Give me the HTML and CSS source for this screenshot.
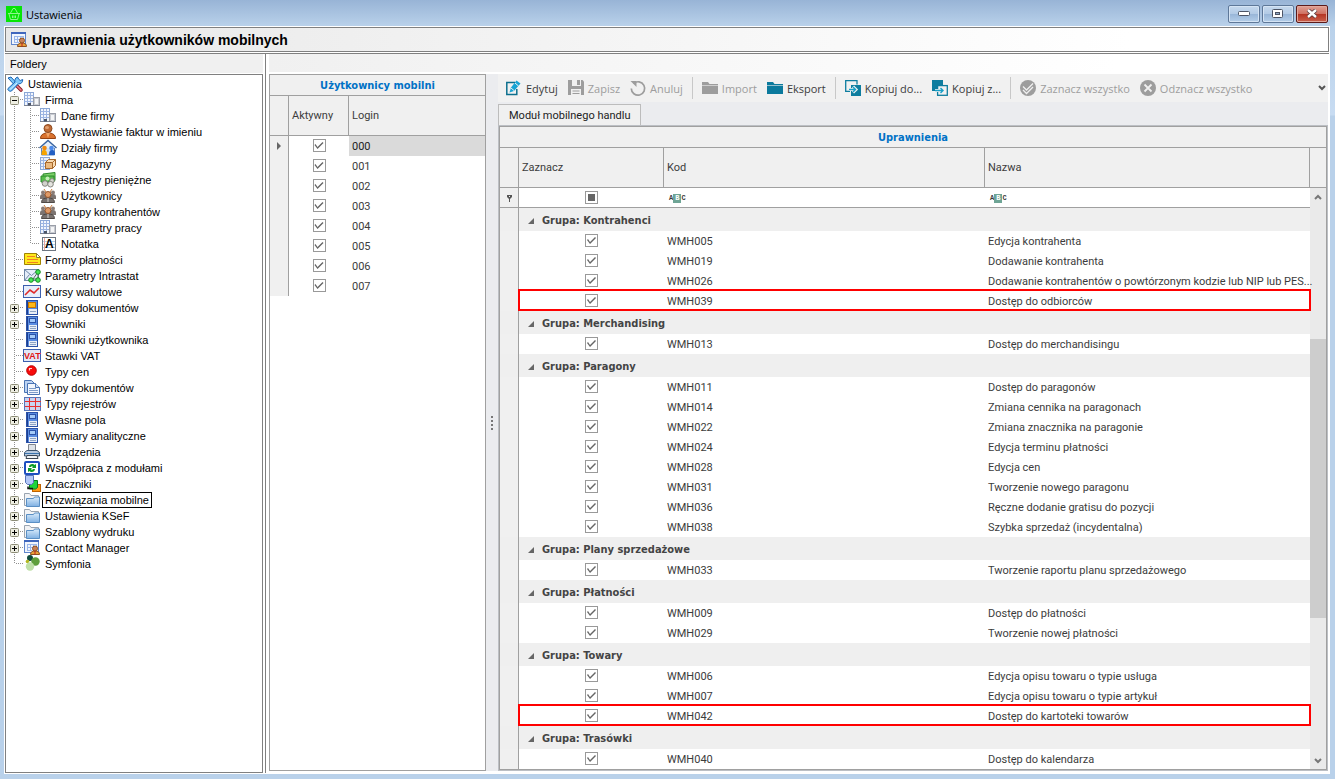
FILE: index.html
```html
<!DOCTYPE html>
<html lang="pl">
<head>
    <meta charset="UTF-8">
    <meta name="viewport" content="width=device-width, initial-scale=1.0">
    <title>Ustawienia</title>
    <link rel="stylesheet" href="styles.css">
</head>
<body>

<!-- icon set -->
<svg class="sprite" width="0" height="0">
    <defs>
        <linearGradient id="blue-fade" x1="0" y1="0" x2="0" y2="1">
            <stop offset="0" stop-color="#d9ebfb"/><stop offset="1" stop-color="#7fb0e2"/>
        </linearGradient>
    </defs>
    <symbol id="i-plus" viewBox="0 0 9 9">
        <rect x=".5" y=".5" width="8" height="8" rx="1" fill="#eeeee2" stroke="#8e8e78"/>
        <path d="M2 4.500h5M4.500 2v5" stroke="#000"/>
    </symbol>
    <symbol id="i-minus" viewBox="0 0 9 9">
        <rect x=".5" y=".5" width="8" height="8" rx="1" fill="#eeeee2" stroke="#8e8e78"/>
        <path d="M2 4.500h5" stroke="#000"/>
    </symbol>
    <symbol id="i-tools" viewBox="0 0 16 16">
        <path d="M10 10l4 4" stroke="#8c1c24" stroke-width="3.600" stroke-linecap="round"/>
        <path d="M10 10l4 4" stroke="#f0808a" stroke-width="1.600" stroke-linecap="round"/>
        <path d="M1 2l3-1 6 6.500-2 2z" fill="#7cc6f8" stroke="#1b63b4"/>
        <path d="M1 12.500L8 6c-.6-2 .3-4.300 2.600-5L11.500 3l1.800 1.500L15.700 3.500c.3 2.700-1.700 4.700-4.200 4.300L4.500 15c-1.500 1-4.500-1-3.500-2.500z" fill="#7cc6f8" stroke="#1b63b4"/>
        <path d="M3 13.500l7-6.500" stroke="#d8f2ff"/>
    </symbol>
    <symbol id="i-building" viewBox="0 0 16 16">
        <rect x=".5" y=".5" width="9" height="13" fill="#f2f6fd" stroke="#8ba7d6"/>
        <path d="M.5 3.500h9M.5 6.500h9M.5 9.500h9M3.500 1v12M6.500 1v12" stroke="#9db5e2"/>
        <rect x="9.500" y="5.500" width="6" height="8" fill="#c9ccd2" stroke="#9a9ea8"/>
        <rect x="11" y="7" width="3" height="5" fill="#f4f5f7"/>
        <path d="M0 13.500h16" stroke="#7c8290"/>
        <rect x="4" y="11" width="3" height="2.500" fill="#4c5668"/>
    </symbol>
    <symbol id="i-person" viewBox="0 0 16 16">
        <path d="M.5 14.500c0-3.500 2-4.500 5-5.500h5c3 1 5 2 5 5.500z" fill="#d9722e" stroke="#974312"/>
        <path d="M6 9l2 5 2-5z" fill="#f2a567"/>
        <circle cx="8" cy="4.500" r="4" fill="#c06a34" stroke="#8c4a20"/>
        <ellipse cx="7" cy="3.500" rx="2" ry="1.500" fill="#e2a070"/>
    </symbol>
    <symbol id="i-house" viewBox="0 0 16 16">
        <path d="M1.500 7h13v8h-13z" fill="#cfe0f6" stroke="#5f86c0"/>
        <path d="M-.5 8L8 .5 16.500 8" fill="#e4eefb" stroke="#39649f" stroke-width="1.400"/>
        <path d="M1.500 15c0-4 .5-5 2.500-5s3 1 3 5z" fill="#f7a400"/><circle cx="4.500" cy="8" r="2.300" fill="#ef8a10"/>
        <path d="M9 15c0-4 1-5 3-5s3 1 3 5z" fill="#2460c4"/><circle cx="11.500" cy="8" r="2.300" fill="#4d8bea"/>
    </symbol>
    <symbol id="i-store" viewBox="0 0 16 16">
        <rect x=".5" y="1.500" width="9" height="12" fill="#eaf1fc" stroke="#8ba7d6"/>
        <path d="M.5 4.500h9M.5 7.500h9M.5 10.500h9M3.500 1v12" stroke="#9db5e2"/>
        <path d="M5.500 6.500l3-3h7v6l-3 3h-7z" fill="#f8dcb4" stroke="#a8682a"/>
        <path d="M5.500 6.500h7v6h-7z" fill="#ecba80" stroke="#a8682a"/><path d="M12.500 6.500l3-3" stroke="#a8682a"/>
    </symbol>
    <symbol id="i-money" viewBox="0 0 16 16">
        <path d="M3 2l12-1.500v8L3 10z" fill="#7ed06a" stroke="#2b8a2b"/>
        <path d="M1 4h13v6H1z" fill="#58bd4c" stroke="#2b8a2b"/><circle cx="7.500" cy="6.500" r="2" fill="#c5efb8"/>
        <circle cx="5" cy="11.500" r="2.800" fill="#d2d2cc" stroke="#86867f"/>
        <circle cx="12" cy="8.800" r="2.200" fill="#d8d8d2" stroke="#86867f"/>
        <circle cx="10.500" cy="12.200" r="2.800" fill="#e4e4df" stroke="#86867f"/>
    </symbol>
    <symbol id="i-group" viewBox="0 0 16 16">
        <path d="M0 9c0-2 1-3 3-3h10c2 0 3 1 3 3v2H0z" fill="#7c7471"/>
        <circle cx="3" cy="4.500" r="2" fill="#8a7c76"/><circle cx="13" cy="4.500" r="2" fill="#8a7c76"/>
        <path d="M1.500 14.500c0-3 2-4.500 6.500-4.500s6.500 1.500 6.500 4.500z" fill="#77706d" stroke="#4f4946"/>
        <path d="M4 1l2 3M12 1l-2 3" stroke="#c77b3e"/>
        <circle cx="8" cy="6.500" r="3" fill="#e09a66" stroke="#94552c"/>
        <path d="M8 10v4" stroke="#d8d2ce"/>
    </symbol>
    <symbol id="i-form" viewBox="0 0 16 16">
        <path d="M.5 1.500h12l4 4v7H.5z" fill="#ffe81c" stroke="#a08300"/>
        <path d="M12.500 1.500v4h4z" fill="#fff" stroke="#8c7b28"/>
        <path d="M3 4.500h8M3 7.500h11M3 10.500h11" stroke="#f08020"/>
    </symbol>
    <symbol id="i-mail" viewBox="0 0 16 16">
        <rect x=".5" y="1.500" width="14" height="11" fill="#e6eef9" stroke="#7088a8"/>
        <path d="M.5 1.500l7 6 7-6M.5 12.500l5-6" fill="none" stroke="#7088a8"/>
        <path d="M14 4L9 11h5z" fill="none" stroke="#50705a"/>
        <circle cx="14" cy="4" r="2.300" fill="#45e855" stroke="#138a20"/>
        <circle cx="7" cy="12" r="2.300" fill="#45e855" stroke="#138a20"/>
        <circle cx="14" cy="12" r="2.300" fill="#45e855" stroke="#138a20"/>
    </symbol>
    <symbol id="i-chart" viewBox="0 0 16 16">
        <rect x="-.5" y="1.500" width="17" height="12" fill="#e6eefb" stroke="#3c5fae"/>
        <path d="M1 11l5-5 4 3 5-5" fill="none" stroke="#e02a2a" stroke-width="1.600"/>
    </symbol>
    <symbol id="i-book" viewBox="0 0 16 16">
        <rect x="2.500" y=".5" width="11" height="14" fill="#5a8de2" stroke="#2b52a8"/>
        <path d="M3.500 1v13" stroke="#1d3f90"/>
        <rect x="5.500" y="2.500" width="6" height="4" fill="#a4caf8" stroke="#2b52a8"/>
        <path d="M5 9h8v5H5z" fill="#e9eef6"/><path d="M6 10.500h6M6 12.500h6" stroke="#8ea4c4"/>
    </symbol>
    <symbol id="i-book-orange" viewBox="0 0 16 16">
        <rect x="2.500" y=".5" width="11" height="14" fill="#5a8de2" stroke="#2b52a8"/>
        <path d="M3.500 1v13" stroke="#1d3f90"/>
        <rect x="4.500" y="2.500" width="7" height="5" fill="#ffb818" stroke="#c87600"/>
        <path d="M5 9h8v5H5z" fill="#e9eef6"/><path d="M6 11.500h6" stroke="#8ea4c4"/>
    </symbol>
    <symbol id="i-red" viewBox="0 0 16 16">
        <circle cx="7.500" cy="6.500" r="4.800" fill="#f80a0a" stroke="#b80000"/><path d="M5.500 6.500v-2H8" fill="none" stroke="#ffd0d0" stroke-width="1.200"/>
    </symbol>
    <symbol id="i-docs" viewBox="0 0 16 16">
        <path d="M.5.5h7l3 3v9H.5z" fill="#bcd3f2" stroke="#4a74b4"/>
        <path d="M3.500 3.500h8l4 4v7h-12z" fill="#f1f6fd" stroke="#4a74b4"/>
        <path d="M5 8.500h7M5 10.500h9M5 12.500h9" stroke="#7f9cc8"/><path d="M11.500 3.500v4h4" fill="#d2e1f5" stroke="#4a74b4"/>
    </symbol>
    <symbol id="i-grid" viewBox="0 0 16 16">
        <rect x=".5" y="1.500" width="16" height="13" fill="#c9d5f2" stroke="#5976b8"/>
        <path d="M1 5.500h16M1 10.500h16M5.500 2v12M11.500 2v12" stroke="#e83030"/>
    </symbol>
    <symbol id="i-printer" viewBox="0 0 16 16">
        <path d="M4.500 7V.5h7V7z" fill="#dfe3e8" stroke="#80858e"/>
        <path d="M.5 8.500L3 6.500h10l2.500 2V12H.5z" fill="#b9cbe0" stroke="#3f556f"/>
        <path d="M1 9.500h14" stroke="#3a73ad"/>
        <path d="M3 11.500h10l1 3H2z" fill="#f2f5f8" stroke="#3b4552"/>
    </symbol>
    <symbol id="i-sync" viewBox="0 0 16 16">
        <rect x="1" y="2" width="14" height="12" rx="1" fill="#fff" stroke="#1e4fc0" stroke-width="2"/>
        <path d="M5 7c0-3.500 4.500-3.500 5.500-2L12 4v4H8l1-1.200c-.8-.8-1.800-.8-2 .2zM11 9c0 3.500-4.500 3.500-5.500 2L4 12V8h4L7 9.200c.8.8 1.800.8 2-.2z" fill="#109c28"/>
    </symbol>
    <symbol id="i-tags" viewBox="0 0 16 16">
        <rect x="8.500" y="8.500" width="8" height="7" fill="#ff9a14" stroke="#c06400"/>
        <path d="M5.500 4.500h8v7l-2 1.500h-6z" fill="#20d43a" stroke="#0b7c1c"/>
        <path d="M1.500-.5h8v7l-2 2h-4l-2-2z" fill="#b4c8f8" stroke="#5572b8"/>
        <path d="M4 10.500v2h5" stroke="#111" fill="none" stroke-width="1.500"/>
    </symbol>
    <symbol id="i-folder" viewBox="0 0 16 16">
        <path d="M.5 13.500v-12h5l1.500 2h7.500v10z" fill="#f2f3f5" stroke="#9aa4b0"/>
        <path d="M2.500 14.500v-8h7l1-1.500h5v9.500z" fill="url(#blue-fade)" stroke="#5a8fc4"/>
    </symbol>
    <symbol id="i-contact" viewBox="0 0 16 16">
        <rect x=".5" y=".5" width="14" height="12" fill="#f0f5fd" stroke="#6086cc"/>
        <path d="M0 1h15" stroke="#3f66bd" stroke-width="2"/>
        <path d="M3 4.500h9M3 7.500h9M3 10.500h5M3.500 4v7M6.500 4v7M9.500 4v5M12.500 4v3" stroke="#9ab6ea"/>
        <path d="M6.500 14.500c0-2.500 1.500-3.500 4.500-3.500s4.500 1 4.500 3.500z" fill="#e8a038" stroke="#8c5020"/>
        <circle cx="11" cy="8.500" r="2.500" fill="#c88058" stroke="#8c5020"/>
        <path d="M11 11v3.500" stroke="#c02020"/>
    </symbol>
    <symbol id="i-symfonia" viewBox="0 0 16 16">
        <circle cx="6" cy="2" r="3" fill="#0e4a3b"/><circle cx="3.500" cy="5.500" r="1.800" fill="#b5b820"/>
        <circle cx="11.500" cy="5.500" r="4.200" fill="#5f9f3c"/><circle cx="6" cy="10.500" r="4.200" fill="#bfe0a8"/>
    </symbol>
    <symbol id="i-basket" viewBox="0 0 16 16">
        <rect width="16" height="16" fill="#06e406"/>
        <path d="M2 7.500h12M3 8l1.500 5.500h7L13 8M4.500 7L7 2.500h2L11.500 7M6.500 9.500v2.500M8 9.500v2.500M9.500 9.500v2.500" fill="none" stroke="#8cf58c"/>
    </symbol>
    <symbol id="i-edit" viewBox="0 0 16 16">
        <path d="M9 2.500H.8v12h10V9" fill="none" stroke="#0c6f8e" stroke-width="1.500"/>
        <path d="M3.500 12.500l1.500-5 5.500-7 4 3-6.500 7.500z" fill="#18a4d4"/><path d="M5 8l3 2.500M9 3l3.500 3" stroke="#f1f1f1"/>
    </symbol>
    <symbol id="i-save" viewBox="0 0 16 16">
        <path d="M0 0h14.500L16 1.500V15H0z"/><path d="M4 0h9v6H4zM3 9h10v6H3z" fill="#f0f0f0"/>
        <path d="M9 0h3v5H9zM4.500 10.500h7v1h-7zM4.500 13h7v1h-7z"/>
    </symbol>
    <symbol id="i-undo" viewBox="0 0 16 16">
        <path d="M3.500 3.500A6.700 6.700 0 1 1 1.300 8.500" fill="none" stroke="currentColor" stroke-width="1.700"/><path d="M.5 1h6v6z"/>
    </symbol>
    <symbol id="i-dir" viewBox="0 0 16 16">
        <path d="M0 2h6l1.500 2H16v10H0z"/><path d="M0 5.500h16" stroke="#f0f0f0" stroke-width=".6"/>
    </symbol>
    <symbol id="i-copy-to" viewBox="0 0 16 16">
        <path d="M6 5h10v11H6z" fill="#0e7d9f"/>
        <path d="M12 4.500V.7H.7v10.600H5" fill="none" stroke="#0e7d9f" stroke-width="1.300"/>
        <path d="M4 9.500h6M8 6.500l3 3-3 3" fill="none" stroke="#f0f0f0" stroke-width="3"/>
        <path d="M4 9.500h6M8 7l2.500 2.500L8 12" fill="none" stroke="#18a0c8" stroke-width="1.400"/>
    </symbol>
    <symbol id="i-copy-from" viewBox="0 0 16 16">
        <rect width="11" height="11" fill="#0e7d9f"/>
        <rect x="5.600" y="5.600" width="9.700" height="9.700" fill="#f0f0f0" stroke="#0e7d9f" stroke-width="1.300"/>
        <path d="M3 10.500h4" stroke="#f0f0f0" stroke-width="3"/>
        <path d="M3 10.500h8M8.500 8l2.500 2.500L8.500 13" fill="none" stroke="#18a0c8" stroke-width="1.400"/>
    </symbol>
    <symbol id="i-all" viewBox="0 0 16 16">
        <circle cx="8" cy="8" r="8"/><path d="M3 6.500L6.500 10 13 3.500M3 10l3.500 3.500L13 7" fill="none" stroke="#f0f0f0" stroke-width="1.300"/>
    </symbol>
    <symbol id="i-none" viewBox="0 0 16 16">
        <circle cx="8" cy="8" r="8"/><path d="M4.500 4.500l7 7M11.500 4.500l-7 7" stroke="#f0f0f0" stroke-width="1.800"/>
    </symbol>
    <symbol id="i-down" viewBox="0 0 8 6"><path d="M1 1l3 3 3-3" fill="none" stroke="currentColor" stroke-width="2"/></symbol>
    <symbol id="i-up" viewBox="0 0 8 6"><path d="M1 5l3-3 3 3" fill="none" stroke="currentColor" stroke-width="2"/></symbol>
    <symbol id="i-pin" viewBox="0 0 7 8"><path d="M1 1h5v2L4 5v3H3V5L1 3z" fill="#555"/><path d="M3 2h1v1H3z" fill="#f0f0f0"/></symbol>
    <symbol id="i-tri" viewBox="0 0 6 6"><path d="M6 0v6H0z" fill="#666"/></symbol>
    <symbol id="i-row" viewBox="0 0 4 8"><path d="M0 0l4 4-4 4z" fill="#666"/></symbol>
</svg>

<div class="window">
    <div class="title-bar">
        <svg class="icon"><use href="#i-basket"/></svg>
        <span class="title-text">Ustawienia</span>
        <div class="window-buttons">
            <button class="win-btn" aria-label="Minimalizuj"><svg width="12" height="6"><rect x=".5" y=".5" width="11" height="4" rx="1" fill="#fff" stroke="#4c5465"/></svg></button>
            <button class="win-btn" aria-label="Maksymalizuj"><svg width="12" height="10"><rect x=".5" y=".5" width="10" height="8" rx="1" fill="#fff" stroke="#4c5465"/><rect x="3.500" y="3.500" width="4" height="2" fill="#8ea6c4" stroke="#4c5465"/></svg></button>
            <button class="win-btn win-close" aria-label="Zamknij"><svg width="12" height="10"><path d="M2 1l8 7M10 1L2 8" stroke="#50383c" stroke-width="4"/><path d="M2 1l8 7M10 1L2 8" stroke="#fff" stroke-width="2.400"/></svg></button>
        </div>
    </div>

    <div class="content">
        <header class="page-header">
            <svg class="icon"><use href="#i-contact"/></svg>
            <h1>Uprawnienia użytkowników mobilnych</h1>
        </header>

        <div class="main">
            <aside class="folders">
                <h2 class="folders-title">Foldery</h2>
                <nav class="tree">
                    <div class="node"><svg class="icon"><use href="#i-tools"/></svg><span class="label">Ustawienia</span></div>
                    <ul>
                        <li>
                            <div class="node"><span class="branch"><button class="toggle" aria-label="Zwiń"><svg><use href="#i-minus"/></svg></button></span><svg class="icon"><use href="#i-building"/></svg><span class="label">Firma</span></div>
                            <ul class="nested">
                                <li><div class="node"><span class="branch"></span><svg class="icon"><use href="#i-building"/></svg><span class="label">Dane firmy</span></div></li>
                                <li><div class="node"><span class="branch"></span><svg class="icon"><use href="#i-person"/></svg><span class="label">Wystawianie faktur w imieniu</span></div></li>
                                <li><div class="node"><span class="branch"></span><svg class="icon"><use href="#i-house"/></svg><span class="label">Działy firmy</span></div></li>
                                <li><div class="node"><span class="branch"></span><svg class="icon"><use href="#i-store"/></svg><span class="label">Magazyny</span></div></li>
                                <li><div class="node"><span class="branch"></span><svg class="icon"><use href="#i-money"/></svg><span class="label">Rejestry pieniężne</span></div></li>
                                <li><div class="node"><span class="branch"></span><svg class="icon"><use href="#i-group"/></svg><span class="label">Użytkownicy</span></div></li>
                                <li><div class="node"><span class="branch"></span><svg class="icon"><use href="#i-group"/></svg><span class="label">Grupy kontrahentów</span></div></li>
                                <li><div class="node"><span class="branch"></span><svg class="icon"><use href="#i-building"/></svg><span class="label">Parametry pracy</span></div></li>
                                <li>
                                    <div class="node"><span class="branch"></span><svg class="icon">
                                        <rect x="2.500" y="1.500" width="13" height="13" fill="#fff" stroke="#6d7681"/>
                                        <path d="M3 5.500h12M3 8.500h12M3 11.500h12" stroke="#b5d2ea"/>
                                        <path d="M4.500 2v12" stroke="#e8a5a0"/>
                                        <text x="5" y="12" class="svg-a">A</text>
                                    </svg><span class="label">Notatka</span></div>
                                </li>
                            </ul>
                        </li>
                        <li><div class="node"><span class="branch"></span><svg class="icon"><use href="#i-form"/></svg><span class="label">Formy płatności</span></div></li>
                        <li><div class="node"><span class="branch"></span><svg class="icon"><use href="#i-mail"/></svg><span class="label">Parametry Intrastat</span></div></li>
                        <li><div class="node"><span class="branch"></span><svg class="icon"><use href="#i-chart"/></svg><span class="label">Kursy walutowe</span></div></li>
                        <li><div class="node"><span class="branch"><button class="toggle" aria-label="Rozwiń"><svg><use href="#i-plus"/></svg></button></span><svg class="icon"><use href="#i-book-orange"/></svg><span class="label">Opisy dokumentów</span></div></li>
                        <li><div class="node"><span class="branch"><button class="toggle" aria-label="Rozwiń"><svg><use href="#i-plus"/></svg></button></span><svg class="icon"><use href="#i-book"/></svg><span class="label">Słowniki</span></div></li>
                        <li><div class="node"><span class="branch"></span><svg class="icon"><use href="#i-book"/></svg><span class="label">Słowniki użytkownika</span></div></li>
                        <li>
                            <div class="node"><span class="branch"></span><svg class="icon">
                                <rect x="-.5" y="1.500" width="17" height="12" fill="#e2e8f6" stroke="#3c5fae"/>
                                <text x="0" y="11" class="svg-vat">VAT</text>
                            </svg><span class="label">Stawki VAT</span></div>
                        </li>
                        <li><div class="node"><span class="branch"></span><svg class="icon"><use href="#i-red"/></svg><span class="label">Typy cen</span></div></li>
                        <li><div class="node"><span class="branch"><button class="toggle" aria-label="Rozwiń"><svg><use href="#i-plus"/></svg></button></span><svg class="icon"><use href="#i-docs"/></svg><span class="label">Typy dokumentów</span></div></li>
                        <li><div class="node"><span class="branch"><button class="toggle" aria-label="Rozwiń"><svg><use href="#i-plus"/></svg></button></span><svg class="icon"><use href="#i-grid"/></svg><span class="label">Typy rejestrów</span></div></li>
                        <li><div class="node"><span class="branch"><button class="toggle" aria-label="Rozwiń"><svg><use href="#i-plus"/></svg></button></span><svg class="icon"><use href="#i-book"/></svg><span class="label">Własne pola</span></div></li>
                        <li><div class="node"><span class="branch"><button class="toggle" aria-label="Rozwiń"><svg><use href="#i-plus"/></svg></button></span><svg class="icon"><use href="#i-book"/></svg><span class="label">Wymiary analityczne</span></div></li>
                        <li><div class="node"><span class="branch"><button class="toggle" aria-label="Rozwiń"><svg><use href="#i-plus"/></svg></button></span><svg class="icon"><use href="#i-printer"/></svg><span class="label">Urządzenia</span></div></li>
                        <li><div class="node"><span class="branch"><button class="toggle" aria-label="Rozwiń"><svg><use href="#i-plus"/></svg></button></span><svg class="icon"><use href="#i-sync"/></svg><span class="label">Współpraca z modułami</span></div></li>
                        <li><div class="node"><span class="branch"><button class="toggle" aria-label="Rozwiń"><svg><use href="#i-plus"/></svg></button></span><svg class="icon"><use href="#i-tags"/></svg><span class="label">Znaczniki</span></div></li>
                        <li><div class="node"><span class="branch"><button class="toggle" aria-label="Rozwiń"><svg><use href="#i-plus"/></svg></button></span><svg class="icon"><use href="#i-folder"/></svg><span class="label selected">Rozwiązania mobilne</span></div></li>
                        <li><div class="node"><span class="branch"><button class="toggle" aria-label="Rozwiń"><svg><use href="#i-plus"/></svg></button></span><svg class="icon"><use href="#i-folder"/></svg><span class="label">Ustawienia KSeF</span></div></li>
                        <li><div class="node"><span class="branch"><button class="toggle" aria-label="Rozwiń"><svg><use href="#i-plus"/></svg></button></span><svg class="icon"><use href="#i-folder"/></svg><span class="label">Szablony wydruku</span></div></li>
                        <li><div class="node"><span class="branch"><button class="toggle" aria-label="Rozwiń"><svg><use href="#i-plus"/></svg></button></span><svg class="icon"><use href="#i-contact"/></svg><span class="label">Contact Manager</span></div></li>
                        <li><div class="node"><span class="branch"></span><svg class="icon"><use href="#i-symfonia"/></svg><span class="label">Symfonia</span></div></li>
                    </ul>
                </nav>
            </aside>

            <div class="workspace">
                <div class="top-strip"></div>
                <div class="panels">
                    <section class="grid users">
                        <h2 class="band">Użytkownicy mobilni</h2>
                        <table>
                            <colgroup><col class="c-ind"><col class="c-active"><col></colgroup>
                            <thead>
                                <tr class="head"><th></th><th>Aktywny</th><th>Login</th></tr>
                            </thead>
                            <tbody>
                                <tr class="current"><td class="ind"><svg width="4" height="8"><use href="#i-row"/></svg></td><td class="tick"><input type="checkbox" aria-label="000" checked></td><td>000</td></tr>
                                <tr><td class="ind"></td><td class="tick"><input type="checkbox" aria-label="001" checked></td><td>001</td></tr>
                                <tr><td class="ind"></td><td class="tick"><input type="checkbox" aria-label="002" checked></td><td>002</td></tr>
                                <tr><td class="ind"></td><td class="tick"><input type="checkbox" aria-label="003" checked></td><td>003</td></tr>
                                <tr><td class="ind"></td><td class="tick"><input type="checkbox" aria-label="004" checked></td><td>004</td></tr>
                                <tr><td class="ind"></td><td class="tick"><input type="checkbox" aria-label="005" checked></td><td>005</td></tr>
                                <tr><td class="ind"></td><td class="tick"><input type="checkbox" aria-label="006" checked></td><td>006</td></tr>
                                <tr><td class="ind"></td><td class="tick"><input type="checkbox" aria-label="007" checked></td><td>007</td></tr>
                            </tbody>
                        </table>
                    </section>

                    <div class="splitter"><i></i><i></i><i></i><i></i></div>

                    <section class="permissions">
                        <div class="toolbar">
                            <button><svg class="icon"><use href="#i-edit"/></svg>Edytuj</button>
                            <button disabled><svg class="icon"><use href="#i-save"/></svg>Zapisz</button>
                            <button disabled><svg class="icon"><use href="#i-undo"/></svg>Anuluj</button>
                            <span class="sep"></span>
                            <button disabled><svg class="icon"><use href="#i-dir"/></svg>Import</button>
                            <button><svg class="icon teal"><use href="#i-dir"/></svg>Eksport</button>
                            <span class="sep"></span>
                            <button><svg class="icon"><use href="#i-copy-to"/></svg>Kopiuj do...</button>
                            <button><svg class="icon"><use href="#i-copy-from"/></svg>Kopiuj z...</button>
                            <span class="sep"></span>
                            <button disabled><svg class="icon"><use href="#i-all"/></svg>Zaznacz wszystko</button>
                            <button disabled><svg class="icon"><use href="#i-none"/></svg>Odznacz wszystko</button>
                            <button class="more" aria-label="Więcej"><svg width="8" height="6"><use href="#i-down"/></svg></button>
                        </div>
                        <div class="tabs">
                            <button class="tab">Moduł mobilnego handlu</button>
                        </div>
                        <div class="tab-page">
                            <div class="grid">
                                <h2 class="band">Uprawnienia</h2>
                                <div class="grid-body">
                                    <div class="rows">
                                        <table>
                                            <colgroup><col class="c-ind"><col class="c-select"><col class="c-code"><col></colgroup>
                                            <thead>
                                                <tr class="head"><th></th><th>Zaznacz</th><th>Kod</th><th>Nazwa</th></tr>
                                                <tr class="filter">
                                                    <td class="ind"><svg width="7" height="8"><use href="#i-pin"/></svg></td>
                                                    <td class="tick"><input type="checkbox" class="partial" aria-label="Zaznacz"></td>
                                                    <td><label class="filter-box"><span class="abc">A<b>B</b>C</span><input type="text" aria-label="Kod"></label></td>
                                                    <td><label class="filter-box"><span class="abc">A<b>B</b>C</span><input type="text" aria-label="Nazwa"></label></td>
                                                </tr>
                                            </thead>
                                            <tbody>
                                                <tr class="group"><td class="ind"></td><td colspan="3"><button><svg width="6" height="6"><use href="#i-tri"/></svg>Grupa: Kontrahenci</button></td></tr>
                                                <tr><td class="ind"></td><td class="tick"><input type="checkbox" aria-label="WMH005" checked></td><td>WMH005</td><td>Edycja kontrahenta</td></tr>
                                                <tr><td class="ind"></td><td class="tick"><input type="checkbox" aria-label="WMH019" checked></td><td>WMH019</td><td>Dodawanie kontrahenta</td></tr>
                                                <tr><td class="ind"></td><td class="tick"><input type="checkbox" aria-label="WMH026" checked></td><td>WMH026</td><td>Dodawanie kontrahentów o powtórzonym kodzie lub NIP lub PES...</td></tr>
                                                <tr class="marked"><td class="ind"></td><td class="tick"><input type="checkbox" aria-label="WMH039" checked></td><td>WMH039</td><td>Dostęp do odbiorców</td></tr>
                                                <tr class="group"><td class="ind"></td><td colspan="3"><button><svg width="6" height="6"><use href="#i-tri"/></svg>Grupa: Merchandising</button></td></tr>
                                                <tr><td class="ind"></td><td class="tick"><input type="checkbox" aria-label="WMH013" checked></td><td>WMH013</td><td>Dostęp do merchandisingu</td></tr>
                                                <tr class="group"><td class="ind"></td><td colspan="3"><button><svg width="6" height="6"><use href="#i-tri"/></svg>Grupa: Paragony</button></td></tr>
                                                <tr><td class="ind"></td><td class="tick"><input type="checkbox" aria-label="WMH011" checked></td><td>WMH011</td><td>Dostęp do paragonów</td></tr>
                                                <tr><td class="ind"></td><td class="tick"><input type="checkbox" aria-label="WMH014" checked></td><td>WMH014</td><td>Zmiana cennika na paragonach</td></tr>
                                                <tr><td class="ind"></td><td class="tick"><input type="checkbox" aria-label="WMH022" checked></td><td>WMH022</td><td>Zmiana znacznika na paragonie</td></tr>
                                                <tr><td class="ind"></td><td class="tick"><input type="checkbox" aria-label="WMH024" checked></td><td>WMH024</td><td>Edycja terminu płatności</td></tr>
                                                <tr><td class="ind"></td><td class="tick"><input type="checkbox" aria-label="WMH028" checked></td><td>WMH028</td><td>Edycja cen</td></tr>
                                                <tr><td class="ind"></td><td class="tick"><input type="checkbox" aria-label="WMH031" checked></td><td>WMH031</td><td>Tworzenie nowego paragonu</td></tr>
                                                <tr><td class="ind"></td><td class="tick"><input type="checkbox" aria-label="WMH036" checked></td><td>WMH036</td><td>Ręczne dodanie gratisu do pozycji</td></tr>
                                                <tr><td class="ind"></td><td class="tick"><input type="checkbox" aria-label="WMH038" checked></td><td>WMH038</td><td>Szybka sprzedaż (incydentalna)</td></tr>
                                                <tr class="group"><td class="ind"></td><td colspan="3"><button><svg width="6" height="6"><use href="#i-tri"/></svg>Grupa: Plany sprzedażowe</button></td></tr>
                                                <tr><td class="ind"></td><td class="tick"><input type="checkbox" aria-label="WMH033" checked></td><td>WMH033</td><td>Tworzenie raportu planu sprzedażowego</td></tr>
                                                <tr class="group"><td class="ind"></td><td colspan="3"><button><svg width="6" height="6"><use href="#i-tri"/></svg>Grupa: Płatności</button></td></tr>
                                                <tr><td class="ind"></td><td class="tick"><input type="checkbox" aria-label="WMH009" checked></td><td>WMH009</td><td>Dostęp do płatności</td></tr>
                                                <tr><td class="ind"></td><td class="tick"><input type="checkbox" aria-label="WMH029" checked></td><td>WMH029</td><td>Tworzenie nowej płatności</td></tr>
                                                <tr class="group"><td class="ind"></td><td colspan="3"><button><svg width="6" height="6"><use href="#i-tri"/></svg>Grupa: Towary</button></td></tr>
                                                <tr><td class="ind"></td><td class="tick"><input type="checkbox" aria-label="WMH006" checked></td><td>WMH006</td><td>Edycja opisu towaru o typie usługa</td></tr>
                                                <tr><td class="ind"></td><td class="tick"><input type="checkbox" aria-label="WMH007" checked></td><td>WMH007</td><td>Edycja opisu towaru o typie artykuł</td></tr>
                                                <tr class="marked"><td class="ind"></td><td class="tick"><input type="checkbox" aria-label="WMH042" checked></td><td>WMH042</td><td>Dostęp do kartoteki towarów</td></tr>
                                                <tr class="group"><td class="ind"></td><td colspan="3"><button><svg width="6" height="6"><use href="#i-tri"/></svg>Grupa: Trasówki</button></td></tr>
                                                <tr><td class="ind"></td><td class="tick"><input type="checkbox" aria-label="WMH040" checked></td><td>WMH040</td><td>Dostęp do kalendarza</td></tr>
                                            </tbody>
                                        </table>
                                    </div>
                                    <div class="side">
                                        <div class="side-head"></div>
                                        <div class="scrollbar">
                                            <button aria-label="W górę"><svg width="8" height="6"><use href="#i-up"/></svg></button>
                                            <div class="track"><div class="thumb"></div></div>
                                            <button aria-label="W dół"><svg width="8" height="6"><use href="#i-down"/></svg></button>
                                        </div>
                                    </div>
                                </div>
                            </div>
                        </div>
                    </section>
                </div>
            </div>
        </div>
    </div>
</div>

</body>
</html>
```

FILE: styles.css
```css
* {
    box-sizing: border-box;
}

body {
    margin: 0;
    font-family: Roboto, sans-serif;
    font-size: 11px;
    color: #3c3c3c;
}

h1, h2, ul {
    margin: 0;
    padding: 0;
}

button {
    padding: 0;
    border: none;
    background: none;
    font: inherit;
    color: inherit;
}

.sprite {
    position: absolute;
}

.icon {
    width: 16px;
    height: 16px;
    flex: none;
}

.icon,
symbol {
    overflow: visible;
}

/* window frame */
.window {
    display: flex;
    flex-direction: column;
    height: 100vh;
    min-height: 779px;
    padding: 0 5px 5px 4px;
    background: linear-gradient(#98b4d6, #b9d1ea 26px, #c8dcf2 115px, #b9d1ea 116px);
}

.title-bar {
    display: flex;
    align-items: center;
    height: 26px;
    padding: 2px 2px 0;
    font-family: "Open Sans", sans-serif;
    color: #000;
}

.title-text {
    margin-left: 4px;
}

.window-buttons {
    display: flex;
    gap: 2px;
    margin-left: auto;
}

.win-btn {
    display: flex;
    align-items: center;
    justify-content: center;
    width: 32px;
    height: 18px;
    border: 1px solid #5e7899;
    border-radius: 2px;
    background: linear-gradient(#c6d9ee, #b2cae5 50%, #98b6d8 51%, #b4cee9);
    box-shadow: inset 0 0 0 1px #d5e4f4;
}

.win-close {
    border-color: #5c1a1a;
    background: linear-gradient(#dfa196, #cf6f60 50%, #b53423 51%, #c9604c);
    box-shadow: inset 0 0 0 1px #e3a79b;
}

.content {
    display: flex;
    flex-direction: column;
    flex: 1;
    min-height: 0;
    padding: 1px;
    background: #fff;
}

.page-header {
    display: flex;
    align-items: center;
    height: 25px;
    padding: 0 5px;
    border: 1px solid #808080;
    background: linear-gradient(90deg, #e8e8e8, #fff 85%);
}

.page-header h1 {
    margin-left: 5px;
    font-family: "Liberation Sans", Arial, sans-serif;
    font-size: 14px;
    color: #000;
}

.main {
    display: flex;
    flex: 1;
    min-height: 0;
    margin-top: 1px;
    border-top: 1px solid #808080;
}

/* folder tree */
.folders {
    display: flex;
    flex-direction: column;
    flex: none;
    width: 258px;
    font-family: "Liberation Sans", Arial, sans-serif;
    color: #000;
}

.folders-title {
    height: 19px;
    margin-bottom: 1px;
    padding-left: 5px;
    background: #f0f0f0;
    font-size: 11px;
    font-weight: normal;
    line-height: 20px;
}

.tree {
    flex: 1;
    padding: 1px;
    border: 1px solid #808080;
}

.tree ul {
    list-style: none;
}

.tree .nested {
    margin-left: 16px;
}

.tree li {
    background: repeating-linear-gradient(#909090 0 1px, transparent 1px 2px) 7px 0 / 1px 100% no-repeat;
}

.tree li:last-child {
    background-size: 1px 8px;
}

.node {
    display: flex;
    align-items: center;
    height: 16px;
}

.branch {
    display: flex;
    align-items: center;
    flex: none;
    width: 17px;
    height: 16px;
    padding-left: 3px;
    background: repeating-linear-gradient(90deg, #909090 0 1px, transparent 1px 2px) 9px 7px / 7px 1px no-repeat;
}

.toggle,
.toggle svg {
    display: block;
    width: 9px;
    height: 9px;
}

.label {
    margin-left: 2px;
    padding: 0 2px;
    border: 1px solid transparent;
    line-height: 14px;
    white-space: nowrap;
}

.selected {
    border-color: #000;
}

.svg-a {
    font: bold 12px "Liberation Sans", sans-serif;
}

.svg-vat {
    font: bold 9px "Liberation Sans", sans-serif;
    fill: #e01818;
}

/* right side */
.workspace {
    display: flex;
    flex-direction: column;
    flex: 1;
    min-width: 0;
    margin-left: 2px;
    padding: 0 1px 2px 3px;
    border-left: 1px solid #808080;
}

.top-strip {
    height: 18px;
    margin-bottom: 2px;
    background: linear-gradient(90deg, #f0f0f0, #fff 80%);
}

.panels {
    display: flex;
    flex: 1;
    min-height: 0;
}

.splitter {
    display: flex;
    flex-direction: column;
    align-items: center;
    justify-content: center;
    gap: 2px;
    flex: none;
    width: 12px;
    background: #ebecef;
}

.splitter i {
    width: 2px;
    height: 2px;
    background: #777;
}

/* data grids */
.grid {
    border: 1px solid #a0a0a0;
    background: #fff;
}

.users {
    flex: none;
    width: 217px;
}

.band,
.group button {
    font-family: "DejaVu Sans Condensed", "DejaVu Sans", sans-serif;
    font-size: 11px;
    font-weight: bold;
}

.band {
    height: 21px;
    border-bottom: 1px solid #a0a0a0;
    background: #f0f0f0;
    line-height: 21px;
    text-align: center;
    color: #0072c6;
}

table {
    width: 100%;
    table-layout: fixed;
    border-spacing: 0;
}

.c-ind {
    width: 19px;
}

.c-active {
    width: 60px;
}

.c-select {
    width: 145px;
}

.c-code {
    width: 321px;
}

th, td {
    height: 20px;
    padding: 0 0 0 3px;
    line-height: 18px;
    text-align: left;
    font-weight: normal;
    white-space: nowrap;
}

td {
    padding-top: 2px;
}

th {
    height: 40px;
    border-right: 1px solid #a0a0a0;
    border-bottom: 1px solid #a0a0a0;
    background: #f0f0f0;
}

.users th:last-child {
    border-right: none;
}

.ind {
    padding: 0;
    border-right: 1px solid #a0a0a0;
    background: #f0f0f0;
    text-align: center;
}

.ind svg {
    display: block;
    margin: 0 auto;
}

.tick {
    padding: 0 0 1px;
}

.current td:last-child {
    background: #dadada;
    color: #222;
}

input[type="checkbox"] {
    appearance: none;
    display: block;
    width: 13px;
    height: 13px;
    margin: 0 auto;
    border: 1px solid #999;
    background: #fff;
}

input[type="checkbox"]:checked::before {
    content: "";
    display: block;
    width: 11px;
    height: 11px;
    background: #666;
    clip-path: polygon(1px 5px, 2px 4px, 4px 7px, 9px 2px, 10px 3px, 4px 9px);
}

.partial::before {
    content: "";
    display: block;
    width: 7px;
    height: 7px;
    margin: 2px;
    background: #666;
}

.filter td {
    border-bottom: 1px solid #a0a0a0;
}

.filter-box {
    display: flex;
    align-items: center;
}

.filter-box input {
    flex: 1;
    min-width: 0;
    height: 16px;
    padding: 0;
    border: none;
    background: none;
    outline: none;
}

.abc {
    display: flex;
    align-items: center;
    margin: 0 4px 0 2px;
    font: bold 7px/9px "Liberation Mono", monospace;
}

.abc b {
    padding: 0 2px;
    background: #6fa596;
    color: #fff;
}

.group td {
    height: 23px;
    background: #efefef;
}

.group button {
    display: flex;
    align-items: center;
    gap: 8px;
    padding-left: 6px;
    color: #444;
}

/* red frame around the highlighted permission */
.marked {
    position: relative;
}

.marked .ind::after {
    content: "";
    position: absolute;
    top: -2px;
    right: -1px;
    bottom: 0;
    left: 18px;
    border: 2px solid #f00;
}

/* toolbar and tab */
.permissions {
    display: flex;
    flex-direction: column;
    flex: 1;
    min-width: 0;
    background: #ebecef;
}

.toolbar {
    display: flex;
    align-items: center;
    height: 28px;
    padding-left: 3px;
    background: #f1f1f1;
    font-family: "Open Sans", sans-serif;
}

.toolbar button {
    display: flex;
    align-items: center;
    gap: 4px;
    padding: 0 5px;
    white-space: nowrap;
}

.toolbar button:disabled {
    color: #9d9d9d;
}

.toolbar .icon {
    fill: currentColor;
}

.toolbar .teal {
    color: #0b7a9d;
}

.toolbar .more {
    margin-left: auto;
    padding: 0 2px;
    color: #555;
}

.sep {
    width: 1px;
    height: 22px;
    margin: 0 4px;
    background: #c8c8c8;
}

.tabs {
    display: flex;
    height: 23px;
    padding-top: 2px;
}

.tab {
    padding: 0 10px;
    border: 1px solid #bcbcbc;
    border-bottom: none;
    background: #f0f0f0;
    color: #222;
}

.tab-page {
    display: flex;
    flex-direction: column;
    flex: 1;
    border: 1px solid #bcbfc4;
}

.tab-page .grid {
    display: flex;
    flex-direction: column;
    flex: 1;
}

.grid-body {
    display: flex;
    flex: 1;
}

.rows {
    flex: 1;
    min-width: 0;
    z-index: 1;
}

.side {
    display: flex;
    flex-direction: column;
    flex: none;
    width: 16px;
}

.side-head {
    height: 40px;
    border-bottom: 1px solid #a0a0a0;
    background: #f0f0f0;
}

.scrollbar {
    display: flex;
    flex-direction: column;
    flex: 1;
    background: #eaeaea;
    color: #777;
}

.scrollbar button {
    display: flex;
    align-items: center;
    justify-content: center;
    height: 17px;
}

.track {
    display: flex;
    flex-direction: column;
    flex: 1;
    padding-top: 134px;
}

.thumb {
    height: 279px;
    background: #cdcdcd;
}
```
